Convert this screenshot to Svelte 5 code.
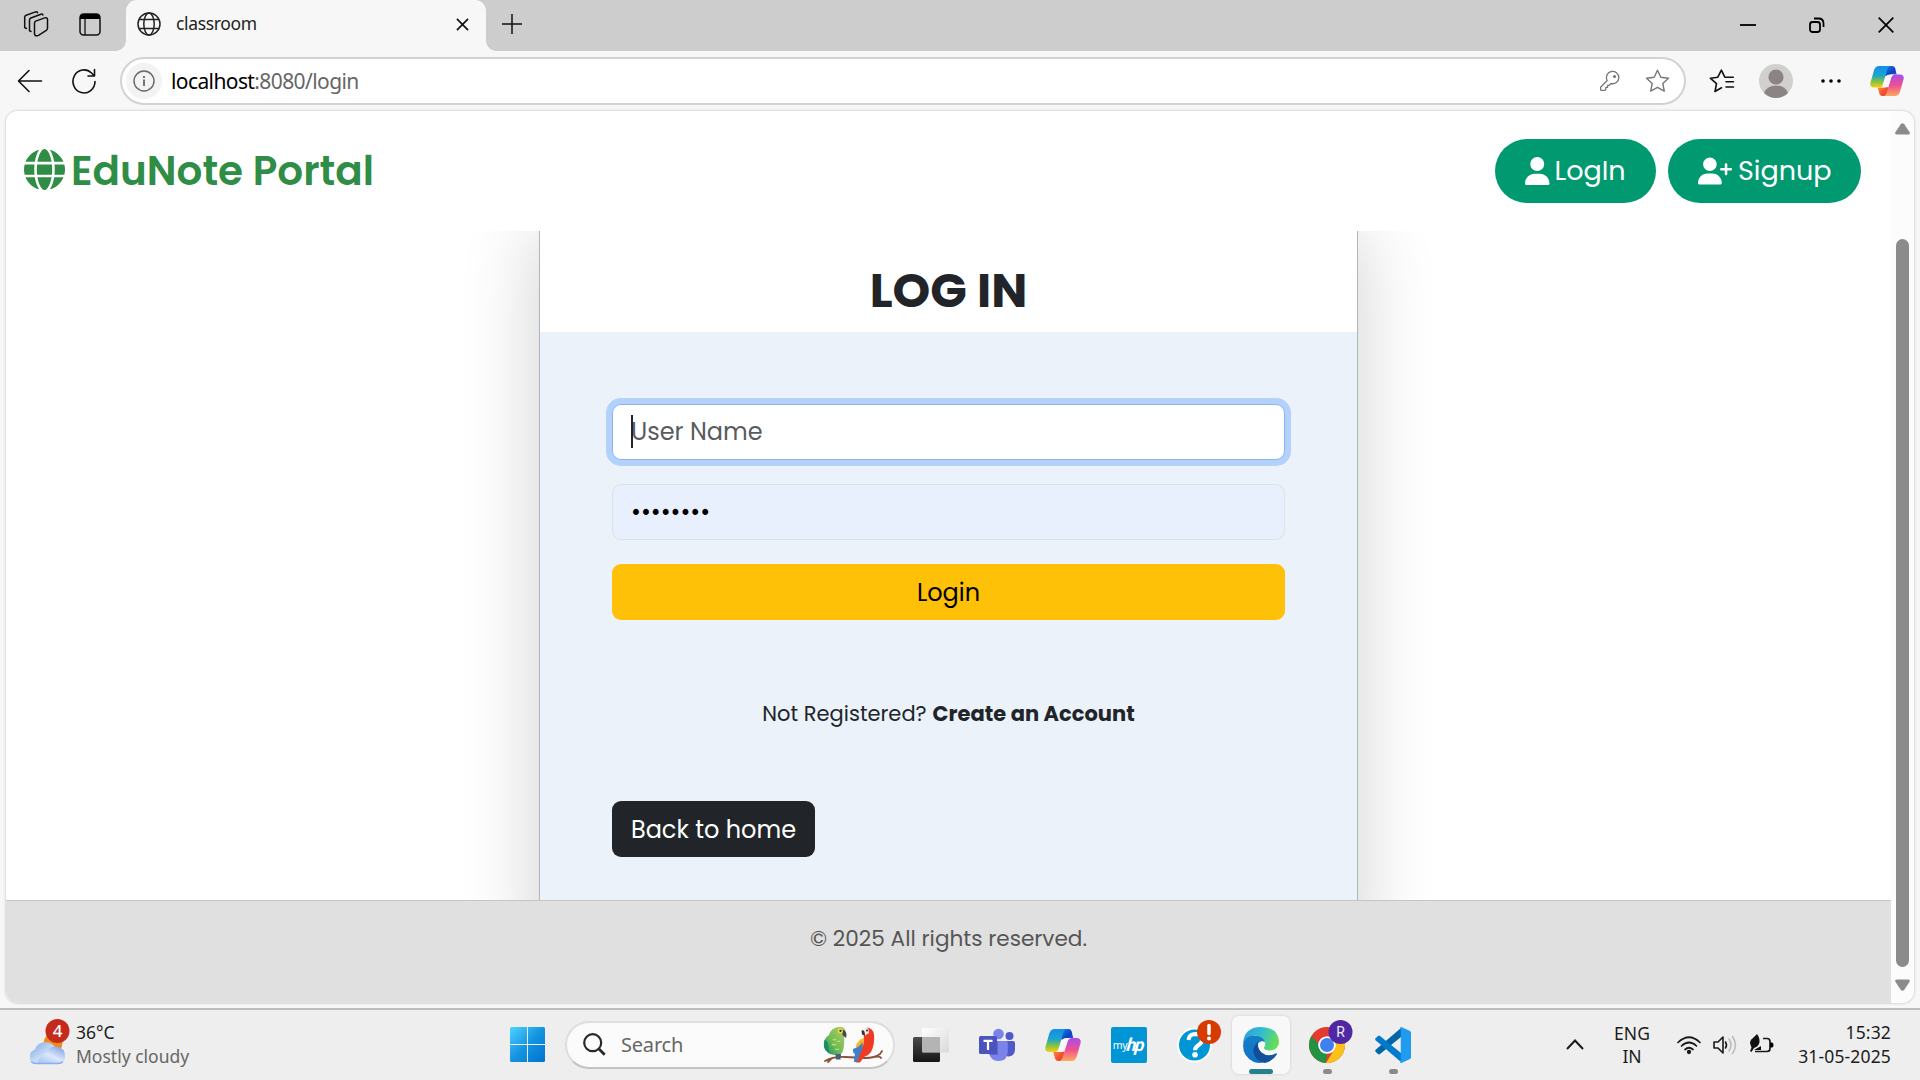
<script>
  const user = 'M224 256A128 128 0 1 0 224 0a128 128 0 1 0 0 256zm-45.7 48C79.8 304 0 383.8 0 482.3C0 498.7 13.3 512 29.7 512H418.3c16.4 0 29.7-13.3 29.7-29.7C448 383.8 368.2 304 269.7 304H178.3z';
  const userPlus = 'M96 128a128 128 0 1 1 256 0A128 128 0 1 1 96 128zM0 482.3C0 383.8 79.8 304 178.3 304h91.4C368.2 304 448 383.8 448 482.3c0 16.4-13.3 29.7-29.7 29.7H29.7C13.3 512 0 498.7 0 482.3zM504 312V248H440c-13.3 0-24-10.7-24-24s10.7-24 24-24h64V136c0-13.3 10.7-24 24-24s24 10.7 24 24v64h64c13.3 0 24 10.7 24 24s-10.7 24-24 24H552v64c0 13.3-10.7 24-24 24s-24-10.7-24-24z';
  const globe = 'M352 256c0 22.2-1.2 43.6-3.3 64H163.3c-2.2-20.4-3.3-41.8-3.3-64s1.2-43.6 3.3-64H348.7c2.2 20.4 3.3 41.8 3.3 64zm28.8-64H503.9c5.3 20.5 8.1 41.9 8.1 64s-2.8 43.5-8.1 64H380.8c2.1-20.6 3.2-42 3.2-64s-1.1-43.4-3.2-64zm112.6-32H376.7c-10-63.9-29.8-117.4-55.3-151.6c78.3 20.7 142 77.5 171.9 151.6zm-149.1 0H167.7c6.1-36.4 15.5-68.6 27-94.7c10.5-23.6 22.2-40.7 33.5-51.5C239.4 3.2 248.7 0 256 0s16.6 3.2 27.8 13.8c11.3 10.8 23 27.9 33.5 51.5c11.6 26 20.9 58.2 27 94.7zm-209 0H18.6C48.6 85.9 112.2 29.1 190.6 8.4C165.1 42.6 145.3 96.1 135.3 160zM8.1 192H131.2c-2.1 20.6-3.2 42-3.2 64s1.1 43.4 3.2 64H8.1C2.8 299.5 0 278.1 0 256s2.8-43.5 8.1-64zM194.7 446.6c-11.6-26-20.9-58.2-27-94.6H344.3c-6.1 36.4-15.5 68.6-27 94.6c-10.5 23.6-22.2 40.7-33.5 51.5C272.6 508.8 263.3 512 256 512s-16.6-3.2-27.8-13.8c-11.3-10.8-23-27.9-33.5-51.5zM135.3 352c10 63.9 29.8 117.4 55.3 151.6C112.2 482.9 48.6 426.1 18.6 352H135.3zm358.1 0c-30 74.1-93.6 130.9-171.9 151.6c25.5-34.2 45.2-87.7 55.3-151.6H493.4z';
</script>

{#snippet copilot(w, id)}
  <svg width={w} height={w} viewBox="0 0 36 36">
    <defs>
      <linearGradient id="{id}a" x1="0" y1="0" x2="0" y2="1"><stop offset=".1" stop-color="#1691ea" /><stop offset=".45" stop-color="#1ba7c8" /><stop offset=".7" stop-color="#7cc04b" /><stop offset="1" stop-color="#f7cf0a" /></linearGradient>
      <linearGradient id="{id}b" x1="0" y1="0" x2="0" y2="1"><stop offset="0" stop-color="#a64df0" /><stop offset=".5" stop-color="#ee4f93" /><stop offset="1" stop-color="#ffa95a" /></linearGradient>
      <linearGradient id="{id}c" x1="0" y1="0" x2="1" y2="1"><stop offset="0" stop-color="#1a84e6" /><stop offset=".6" stop-color="#0f3fc4" /><stop offset="1" stop-color="#2469e0" /></linearGradient>
      <linearGradient id="{id}d" x1="0" y1="0" x2="1" y2="1"><stop offset="0" stop-color="#ff9a3c" /><stop offset=".6" stop-color="#f4512c" /><stop offset="1" stop-color="#d93a56" /></linearGradient>
    </defs>
    <path d="M18 2h5.500q2.400 0 3.200 2.400l1.500 6.600h-5.500q-3.500 0-4.500 3l-3-3z" fill="url(#{id}c)" />
    <path d="M19 34h-6q-2.200 0-3-2.400L8.200 25h5q3 0 4-3l2 2z" fill="url(#{id}d)" />
    <path d="M9.500 2h11.700c-1.700 1-2.500 2.500-3.200 5l-4.400 14.600q-1 3.400-4 3.400H4.600Q-.2 25 .3 20.500L4.200 6.800Q5.500 2 9.500 2z" fill="url(#{id}a)" />
    <path d="M26.500 34H14.800c1.700-1 2.500-2.500 3.200-5l4.400-14.600q1-3.400 4-3.400h5q4.800 0 4.300 4.500l-3.900 13.700Q30.500 34 26.500 34z" fill="url(#{id}b)" />
    <path d="M21.800 11h4q-2.400.4-3.300 3.400l-2.600 8.400q-.7 2.200-3 2.200h-5.200q1.500-.6 2.200-3l2.800-8.500q.9-2.500 5.100-2.500z" fill="#f9f7f9" />
  </svg>
{/snippet}

<div class="screen">
  <div class="tabs">
    <svg class="workspaces" width="26" height="26" viewBox="0 0 26 26" fill="none" stroke="#111" stroke-width="1.500" stroke-linejoin="round" stroke-linecap="round"><path d="M11.500 12q0-1.300 1.200-1.900l9-3.200q2.600-.7 2.800 1.300v9q0 1.400-1.200 2.200l-7.800 5q-3.400 1.400-4-1.400z" /><path d="M8 20.500 6.500 19.800V9q0-1.500 1.400-2l10-3.800q1.600-.4 2 .8" /><path d="m3.500 17.500-1.800-.9V6q0-1.300 1.400-1.800L12.500.9q1.600-.4 2 .8" /></svg>
    <svg class="vertical" width="22" height="23" viewBox="0 0 22 23"><rect x="1" y="1" width="20" height="21" rx="3.500" fill="none" stroke="#111" stroke-width="1.500" /><path d="M1 6V4q0-3 3-3h14q3 0 3 3v2z" /><path d="M6 6v16" stroke="#111" stroke-width="1.300" /></svg>
    <div class="tab">
      <svg width="24" height="24" viewBox="0 0 24 24" fill="none" stroke="#222" stroke-width="1.500"><circle cx="12" cy="12" r="11" /><ellipse cx="12" cy="12" rx="5.200" ry="11" /><path d="M2.200 7.500h19.600M2.200 16.500h19.600" /></svg>
      <span class="tab-title">classroom</span>
      <svg width="13" height="13" viewBox="0 0 14 14" stroke="#111" stroke-width="1.800"><path d="m1 1 12 12M13 1 1 13" /></svg>
    </div>
    <svg class="new" width="22" height="22" viewBox="0 0 22 22" stroke="#111" stroke-width="1.500"><path d="M11 1v20M1 11h20" /></svg>
    <div class="window">
      <svg width="16" height="16" viewBox="0 0 16 16" stroke="#000" stroke-width="1.800"><path d="M0 8h16" /></svg>
      <svg width="16" height="16" viewBox="0 0 16 16" fill="none" stroke="#000" stroke-width="1.800"><rect x="1" y="5" width="10" height="10" rx="2.500" /><path d="M5 1.500h4.500q5 0 5 5V10" /></svg>
      <svg width="16" height="16" viewBox="0 0 16 16" stroke="#000" stroke-width="1.700"><path d="m.7.700 14.600 14.600M15.300.700.700 15.300" /></svg>
    </div>
  </div>

  <div class="toolbar">
    <svg width="26" height="24" viewBox="0 0 26 24" fill="none" stroke="#111" stroke-width="1.600" stroke-linecap="round" stroke-linejoin="round"><path d="M24.500 12H1.500M12 1.500 1.500 12 12 22.500" /></svg>
    <svg class="reload" width="26" height="26" viewBox="0 0 26 26" fill="none" stroke="#111" stroke-width="1.600" stroke-linecap="round" stroke-linejoin="round"><path d="M24 13.500A11 11.500 0 1 1 20.500 5l3 3M23.500 1.500V8H17" /></svg>
    <div class="address">
      <span class="info"><svg width="22" height="22" viewBox="0 0 22 22" fill="none" stroke="#666" stroke-width="1.400"><circle cx="11" cy="11" r="10" /><path d="M11 9.500V16M11 6v2" stroke-width="1.800" /></svg></span>
      <span class="url"><b>localhost</b>:8080/login</span>
      <svg width="20" height="20" viewBox="0 0 20 20" fill="none" stroke="#777" stroke-width="1.300" stroke-linejoin="round"><path d="M7.200 9.500A6.200 6.200 0 1 1 11 12.500L9.200 14.300H7.600v2H5.800v2L5 19.400H1.500Q.6 19.400.6 18.500V16.200z" /><circle cx="14.500" cy="5.500" r=".9" fill="#777" /></svg>
      <svg class="star" width="25" height="24" viewBox="0 0 25 24" fill="none" stroke="#777" stroke-width="1.400" stroke-linejoin="round"><path d="m12.500 1.200 3.300 7 7.700 1-5.700 5.300 1.500 7.600-6.800-3.700-6.800 3.700 1.500-7.600L1.500 9.200l7.700-1z" /></svg>
    </div>
    <svg class="favs" width="26" height="24" viewBox="0 0 26 24" fill="none" stroke="#111" stroke-width="1.600" stroke-linejoin="round" stroke-linecap="round"><path d="M12.500 18.800 6 22.500l1.500-7.800L1.300 9.200l7.500-1 3.600-7 3.400 7h8.500M17 12.700h7.500M17 18h7.500" /></svg>
    <svg class="avatar" width="34" height="34" viewBox="0 0 34 34"><circle cx="17" cy="17" r="17" fill="#d2d0ce" /><circle cx="17" cy="13" r="7.600" fill="#8a8583" /><path d="M5 29q3-7.500 12-7.500T29 29q-5 5-12 5T5 29z" fill="#8a8583" /></svg>
    <svg class="dots" width="20" height="4" viewBox="0 0 20 4"><circle cx="2" cy="2" r="1.800" /><circle cx="10" cy="2" r="1.800" /><circle cx="18" cy="2" r="1.800" /></svg>
    {@render copilot(34, 'top')}
  </div>

  <div class="page">
    <div class="content">
      <header>
        <svg class="globe" width="41" height="41" viewBox="0 0 512 512"><path d={globe} fill="#2f8d46" /></svg>
        <span class="brand">EduNote Portal</span>
        <span class="pill"><svg width="24.500" height="28" viewBox="0 0 448 512"><path d={user} fill="#fff" /></svg><span>LogIn</span></span>
        <span class="pill signup"><svg width="34" height="28" viewBox="0 0 640 512"><path d={userPlus} fill="#fff" /></svg><span>Signup</span></span>
      </header>
      <main>
        <section class="card">
          <h1><span>LOG IN</span></h1>
          <div class="body">
            <div class="field focus"><span>User Name</span><i></i></div>
            <div class="field filled"><span>••••••••</span></div>
            <div class="login"><span>Login</span></div>
            <p><span>Not Registered?</span><strong>Create an Account</strong></p>
            <div class="home"><span>Back to home</span></div>
          </div>
        </section>
      </main>
      <footer><span>© 2025 All rights reserved.</span></footer>
    </div>
    <div class="scroll">
      <svg width="15" height="12" viewBox="0 0 15 12"><path d="M5.700 1.200q1.800-2 3.600 0l5.300 8q.8 2.300-1.600 2.300H2Q-.400 11.500.4 9.200z" fill="#8b8b8b" /></svg>
      <div class="thumb"></div>
      <svg width="15" height="12" viewBox="0 0 15 12"><path d="M5.700 10.800q1.800 2 3.600 0l5.300-8Q15.400.5 13 .5H2Q-.400.500.4 2.800z" fill="#8b8b8b" /></svg>
    </div>
  </div>

  <div class="taskbar">
    <div class="weather">
      <svg width="42" height="50" viewBox="0 0 42 50">
        <defs><linearGradient id="cl" x1="0" y1="0" x2="1" y2="1"><stop offset="0" stop-color="#7ea4e8" /><stop offset=".5" stop-color="#c4daf5" /><stop offset="1" stop-color="#dde9fb" /></linearGradient><linearGradient id="cl2" x1="1" y1="0" x2=".3" y2="1"><stop offset="0" stop-color="#7397e0" /><stop offset=".6" stop-color="#dce8fb" /><stop offset="1" stop-color="#adc8f5" /></linearGradient></defs>
        <circle cx="25" cy="25" r="9.500" fill="#f08a1c" />
        <path d="M8 46a7.500 7.500 0 0 1-1-14.500A11 10 0 0 1 27 29l4 17z" fill="url(#cl)" />
        <path d="M10 46q1-10 8-11 3-7 10-6.500 9 1 9 10 0 7.500-7 7.500z" fill="url(#cl2)" />
        <path d="M3 43.500q2 2 5 2h22q3 0 5-2" fill="none" stroke="#8cabf0" stroke-width="1.300" />
        <circle cx="29.500" cy="13" r="12" fill="#c42b1c" />
        <text x="29.500" y="19.200" text-anchor="middle" font-size="17" font-family="Noto Sans" font-weight="500" fill="#fff">4</text>
      </svg>
      <div><div class="temp">36°C</div><div class="sky">Mostly cloudy</div></div>
    </div>
    <svg width="35" height="35" viewBox="0 0 35 35"><defs><linearGradient id="win" x1="0" y1="0" x2="1" y2="1"><stop offset="0" stop-color="#4fd3ff" /><stop offset=".5" stop-color="#1494e0" /><stop offset="1" stop-color="#0072cf" /></linearGradient></defs><path d="M1.500 0H17v17H0V1.500Q0 0 1.500 0zM18 0h15.500Q35 0 35 1.500V17H18zM0 18h17v17H1.500Q0 35 0 33.500zM18 18h17v15.500q0 1.500-1.500 1.500H18z" fill="url(#win)" /></svg>
    <div class="search">
      <svg width="23" height="23" viewBox="0 0 23 23" fill="none" stroke="#282828"><circle cx="9.700" cy="9.700" r="8.500" stroke-width="2.200" /><path d="m16 16 5.700 5.700" stroke-width="2.800" /></svg>
      <span>Search</span>
      <svg width="61" height="38" viewBox="0 0 61 38">
        <defs><linearGradient id="gb" x1="1" y1="0" x2="0" y2="1"><stop offset="0" stop-color="#b8cd6a" /><stop offset=".55" stop-color="#72bd55" /><stop offset="1" stop-color="#168e6f" /></linearGradient></defs>
        <path d="M2 35q8-4.500 20-4t20 1q10 0 15-4l2-3M53 31q4-1 5 1M8 33l-3 3" stroke="#8a5038" stroke-width="1.800" fill="none" stroke-linecap="round" />
        <path d="M15 1Q21 0 22.500 4.500q0 3-1.500 5Q22 19 19.500 26 18 29.500 12 29 3 28 1 21-.500 13 6 9 8 2 15 1z" fill="url(#gb)" />
        <path d="M1.500 14q4 1 4 7t4.500 7Q3 27 1 21z" fill="#178e63" />
        <path d="M10 13q1 2 3 0M9 18q2 2 4 0m1-3q2 1 3 0M12 23q2 1 4 0" stroke="#c4df6b" stroke-width="1.200" fill="none" />
        <path d="M19.500 3.500q4 1 4 5.500l-.500 3-3.500-3z" fill="#424753" /><circle cx="17.300" cy="4.800" r="2.600" fill="#f4d83b" /><circle cx="17.500" cy="4.800" r="1.100" fill="#222" />
        <path d="M12.500 28h5.500l-.5 5.500h-4.500z" fill="#46607a" />
        <path d="M44 1.500q6 .5 7 7 1 10-3 17.500-3 4-7 5L37 36.500h-4q-.5-7 2-12.500-1-6 6-12-2-8.500 3-10.500z" fill="#ef3b22" />
        <path d="M41 12q1 7-3.500 11l-5-2q2-7 8.500-9z" fill="#f5b728" /><path d="M30 23q7-2 9.500-7 1 7-2.500 12l-3 8h-3q0-4 1-8-2.500-1-2-5z" fill="#3f7fcb" />
        <path d="M40 3q3-2.500 5.500 0l.5 4-4 2.500q-2.500-3-2-6.500z" fill="#f3eee2" /><path d="M38.500 4.500q3.500-1 3.500 5l-3-1z" fill="#333" /><circle cx="44" cy="4.500" r="1" fill="#222" />
      </svg>
    </div>
    <div class="apps">
      <div class="app"><svg width="36" height="36" viewBox="0 0 36 36"><defs><linearGradient id="tv" x1="0" y1="0" x2="1" y2="1"><stop offset="0" stop-color="#fff" /><stop offset="1" stop-color="#d9d9d9" /></linearGradient><linearGradient id="td" x1="0" y1="0" x2="0" y2="1"><stop offset="0" stop-color="#4b4b4b" /><stop offset="1" stop-color="#151515" /></linearGradient></defs><rect y="10" width="27" height="25" rx="1.500" fill="url(#td)" /><rect x="9" y="1" width="27" height="24.500" rx="1.500" fill="url(#tv)" /><path d="M9 10h18v15H9z" fill="#b4b4b4" /></svg></div>
      <div class="app"><svg width="36" height="36" viewBox="0 0 36 36"><circle cx="19.500" cy="7" r="5.300" fill="#7b83eb" /><circle cx="30.500" cy="9" r="4" fill="#5059c9" /><path d="M23 14h11q2 0 2 2v6q0 7-6 7.500-5 0-7-4z" fill="#5059c9" /><path d="M11 14h16q1.800 0 1.800 2v8q0 10-9.500 10-8 0-9.500-9z" fill="#7b83eb" /><path d="M11 14h8v14h-8.500z" fill="#555cc4" opacity=".7" /><rect y="9" width="18" height="18" rx="1.500" fill="#4b53bc" /><path d="M4.500 13.800h9M9 13v10" stroke="#fff" stroke-width="2.200" /></svg></div>
      <div class="app">{@render copilot(36, 'task')}</div>
      <div class="app"><div class="hp"><span>my</span><em>hp</em></div></div>
      <div class="app"><svg width="46" height="46" viewBox="0 0 46 46"><circle cx="22.500" cy="23" r="16.500" fill="#0096d6" stroke="#fff" stroke-width="2" /><path d="M16.500 18q.5-6 7-6 6.500.3 6.500 6 0 3-4 5.500-3 2-3 4.800" fill="none" stroke="#fff" stroke-width="4" /><circle cx="23" cy="32.800" r="2.800" fill="#fff" /><circle cx="37" cy="10" r="12" fill="#d83b01" /><path d="M37 3.500v8" stroke="#fff" stroke-width="3.500" stroke-linecap="round" /><circle cx="37" cy="16.500" r="2" fill="#fff" /></svg></div>
      <div class="app active"><svg width="36" height="36" viewBox="0 0 36 36">
        <defs><linearGradient id="e1" x1="0" y1=".3" x2="1" y2=".6"><stop offset="0" stop-color="#2a9fdc" /><stop offset=".45" stop-color="#30bed3" /><stop offset="1" stop-color="#6be04c" /></linearGradient><linearGradient id="e2" x1="0" y1="0" x2="0" y2="1"><stop offset="0" stop-color="#1480c5" /><stop offset="1" stop-color="#1170cc" /></linearGradient><linearGradient id="e3" x1="0" y1="0" x2="1" y2="0"><stop offset="0" stop-color="#134a95" /><stop offset="1" stop-color="#0f5aa3" /></linearGradient></defs>
        <path d="M0 17Q1 0 18 0q17 .5 18 14.500 0 8.500-9.500 9-7-.5-5-4 1.300-2 .5-4Q17 7 9 9q-7 2-9 8z" fill="url(#e1)" />
        <path d="M0 18Q1 9 11 8.500q9 .2 11 6.500-3-1.500-6 .5-5 4-1 12 3 5 10 6-6 4-14 1.500Q0 30 0 18z" fill="url(#e2)" />
        <path d="M15.500 14.500q-7 6-4.500 12.500 3 8 11 9 8-2 12-8.700 0-1.300-1.400-.8-8 4-14-1-5-5-3.100-11z" fill="url(#e3)" />
      </svg><i class="long"></i></div>
      <div class="app"><svg width="46" height="46" viewBox="0 0 46 46"><circle cx="23" cy="23" r="18" fill="#e33b2e" /><path d="M7.400 14 23 32l-1 9A18 18 0 0 1 7.400 14z" fill="#229342" /><path d="M23 15h16.100A18 18 0 0 1 22 41l8.500-14z" fill="#fbc116" /><circle cx="23" cy="23" r="8.800" fill="#fff" /><circle cx="23" cy="23" r="7" fill="#3f7ff0" /><circle cx="36.500" cy="10" r="12" fill="#5128a3" /><text x="36.500" y="15.200" text-anchor="middle" font-family="Roboto" font-size="14" fill="#eee">R</text></svg><i></i></div>
      <div class="app"><svg width="36" height="36" viewBox="0 0 36 36"><path d="M26 1v9L5 27q-1 .8-2 0l-2.400-2.200q-1-1 0-2z" fill="#0065a9" /><path d="M26 35v-9L5 9Q4 8.200 3 9L.6 11.200q-1 1 0 2z" fill="#007acc" /><path d="M26.500 0 35 4q1 .5 1 1.600v24.800q0 1.100-1 1.600l-8.500 4q-1 .2-1.500-.5l1.500-1.500V2L25 .5q.5-.7 1.500-.5z" fill="#1f9cf0" /><path d="M26.500 2V34" stroke="#1f9cf0" stroke-width="1.500" /></svg><i></i></div>
    </div>
    <svg class="chev" width="18" height="11" viewBox="0 0 18 11" fill="none" stroke="#1a1a1a" stroke-width="2"><path d="m1 10 8-8.500L17 10" /></svg>
    <div class="lang">ENG<br />IN</div>
    <div class="tray">
      <svg width="24" height="24" viewBox="0 0 24 24" fill="none" stroke="#1a1a1a" stroke-width="1.700" stroke-linecap="round"><path d="M1 9.500q11-10.500 22 0M4.500 13q7.500-7 15 0M8 16.500q4-3.500 8 0" /><circle cx="12" cy="19" r="1.300" fill="#1a1a1a" /></svg>
      <svg width="24" height="24" viewBox="0 0 24 24" fill="none" stroke-width="1.600" stroke-linecap="round" stroke-linejoin="round"><path d="M1 9h4l5-5v16l-5-5H1zM12.500 9q2 3 0 6" stroke="#1a1a1a" /><path d="M16 6q4 6 0 12M19.500 3.500q6 8.500 0 17" stroke="#bcbcbc" /></svg>
      <svg width="25" height="24" viewBox="0 0 25 24"><path d="M14 5.500h4q3 0 3 3v7q0 3-3 3H6" fill="none" stroke="#1a1a1a" stroke-width="1.700" /><path d="M21 9.500h2q1.500 0 1.500 2.500t-1.500 2.500h-2z" /><path d="M1 18q1-2 1.500-3.500Q-1 8 4 5l4-4q3 4 2.500 8.500Q9 14 5 15l-2.500 4zM5 17l7-4v4z" fill="#111" /></svg>
    </div>
    <div class="clock">15:32<br />31-05-2025</div>
  </div>
</div>

<style>
  :global(body) { margin: 0; overflow: hidden; }
  * { box-sizing: border-box; }
  svg { display: block; flex: none; overflow: visible; }
  span, strong, .clock, .sky { white-space: nowrap; }
  .screen { width: 1920px; height: 1080px; display: flex; flex-direction: column; background: #f7f7f7; font-family: "Noto Sans", sans-serif; overflow: hidden; }
  .tabs { height: 51px; flex: none; display: flex; align-items: center; background: #cdcdcd; padding-bottom: 3px; }
  .workspaces { margin-left: 23px; }
  .vertical { margin: 0 36px 0 30px; }
  .tab { position: relative; width: 360px; height: 51px; margin: 0 15px 0 -11px; align-self: flex-start; display: flex; align-items: center; padding: 0 17px 3px 11px; background: #f7f7f7; border-radius: 11px 11px 0 0; }
  .tab::before, .tab::after { content: ""; position: absolute; bottom: 0; width: 10px; height: 10px; }
  .tab::before { left: -10px; background: radial-gradient(circle at 0 0, transparent 9.500px, #f7f7f7 10px); }
  .tab::after { right: -10px; background: radial-gradient(circle at 100% 0, transparent 9.500px, #f7f7f7 10px); }
  .tab-title { flex: 1; margin-left: 15px; padding-bottom: 2px; font-size: 17.500px; letter-spacing: -.35px; color: #222; }
  .window { display: flex; gap: 53px; margin-left: auto; margin-right: 26.500px; padding-top: 2px; }
  .toolbar { height: 60px; flex: none; display: flex; align-items: center; padding: 0 15px 0 17px; }
  .reload { margin: 0 23px 0 28px; }
  .address { width: 1566px; height: 48px; display: flex; align-items: center; border: 2px solid #d2d2d2; border-radius: 24px; background: #fff; padding: 0 14px 0 4px; }
  .info { display: grid; place-items: center; width: 36px; height: 36px; border-radius: 50%; background: #f3f3f3; }
  .url { flex: 1; margin-left: 9px; font-size: 21px; letter-spacing: -.6px; color: #666; }
  .url b { font-weight: 400; color: #000; }
  .star { margin-left: 25px; }
  .favs { margin-left: 23px; }
  .avatar { margin-left: 24px; }
  .dots { margin: 0 29px 0 28px; }
  .page { width: 1908px; height: 892px; flex: none; margin-left: 6px; display: flex; border-radius: 12px; overflow: hidden; background: #fcfcfc; box-shadow: 0 0 2px 1px #dadada; }
  .content { width: 1885px; display: flex; flex-direction: column; font-family: Poppins, Inter, sans-serif; background: #fff; }
  header { height: 120px; flex: none; display: flex; align-items: center; padding: 0 30px 0 18px; }
  .globe { margin-bottom: 3px; }
  .brand { flex: 1; margin-left: 6px; padding-bottom: 2px; color: #2f8d46; font-size: 40.500px; font-weight: 600; }
  .pill { display: flex; align-items: center; gap: 5px; height: 64px; width: 161px; padding-left: 30px; border-radius: 32px; background: #009970; color: #fff; font-size: 27px; }
  .signup { width: 193px; margin-left: 12px; gap: 6px; }
  main { height: 669px; flex: none; overflow: hidden; display: flex; justify-content: center; }
  .card { width: 819px; height: 740px; margin-top: -25px; border: 1px solid #adb5bd; background: #ebf2fa; box-shadow: 0 24px 72px rgba(0, 0, 0, .19); }
  h1 { height: 125px; margin: 0; padding-top: 49px; background: #fff; text-align: center; font-size: 48px; line-height: 70px; color: #212529; }
  .body { padding: 72px; display: flex; flex-direction: column; }
  .field { position: relative; height: 56px; margin-bottom: 24px; padding-left: 18px; line-height: 54px; border: 1px solid #dee2e6; border-radius: 9px; font-size: 24px; }
  .focus { background: #fff; border-color: #86b7fe; box-shadow: 0 0 0 6px #b4d1fc; color: #595c5f; }
  .focus i { position: absolute; left: 18px; top: 10px; width: 2px; height: 33px; background: #212529; }
  .filled { background: #e8f0fe; color: #000; }
  .login { height: 56px; border-radius: 9px; background: #ffc107; text-align: center; font-size: 24px; line-height: 57px; color: #000; }
  p { margin: 77px 0 71px; height: 33px; line-height: 33px; display: flex; justify-content: center; gap: 6px; font-size: 21px; color: #212529; }
  .home { width: 203px; height: 56px; border-radius: 9px; background: #212529; color: #fff; text-align: center; line-height: 57px; font-size: 24px; }
  footer { flex: 1; border-top: 1px solid #c6c6c6; background: #e0e0e0; color: #555; text-align: center; font-size: 21.600px; line-height: 76px; }
  .scroll { width: 23px; display: flex; flex-direction: column; align-items: center; padding: 12px 0 12px; }
  .thumb { width: 13px; height: 728px; margin: 104px 0 12px; border-radius: 7px; background: #8b8b8b; }
  .taskbar { height: 72px; flex: none; margin-top: 5px; display: flex; align-items: center; border-top: 2px solid #bdbdbd; background: #eee; color: #1c1c1c; font-size: 17.500px; line-height: 24px; padding-bottom: 1px; }
  .weather { width: 482px; margin-left: 28px; display: flex; gap: 6px; align-items: flex-start; padding-bottom: 4px; }
  .weather > div { padding-top: 2px; }
  .sky { color: #666; }
  .search { width: 330px; height: 48px; margin-left: 20px; display: flex; align-items: center; border: 2px solid #dedede; border-bottom-color: #c4c4c4; border-radius: 24px; background: #fbfbfb; padding: 0 9px 0 16px; color: #666; font-size: 20px; }
  .search span { flex: 1; margin-left: 15px; letter-spacing: -.2px; }
  .apps { display: grid; grid-template-columns: repeat(8, 66px); margin-left: 3px; }
  .app { position: relative; height: 58px; width: 58px; margin: 0 4px; border-radius: 7px; display: grid; place-items: center; }
  .active { background: #f8f8f8; box-shadow: 0 0 2px 1px #dedede; }
  .app i { position: absolute; left: 25px; bottom: 0; width: 9px; height: 5px; border-radius: 3px; background: #8a8a8a; }
  .app .long { left: 17px; width: 24px; background: #24818e; }
  .hp { width: 36px; height: 36px; border-radius: 2px; background: #0096d6; color: #fff; display: flex; align-items: center; justify-content: center; }
  .hp span { font-size: 10.500px; padding-top: 1px; letter-spacing: -.3px; }
  .hp em { font-family: Roboto, sans-serif; font-size: 18px; font-weight: 700; letter-spacing: -1.800px; padding-right: 2px; transform: skewX(-6deg); }
  .chev { margin-left: 140px; }
  .lang { width: 50px; margin-left: 23px; text-align: center; line-height: 23px; }
  .tray { display: flex; gap: 12px; margin-left: 20px; }
  .clock { margin-left: auto; margin-right: 29px; text-align: right; letter-spacing: .15px; padding-bottom: 2px; }
</style>
